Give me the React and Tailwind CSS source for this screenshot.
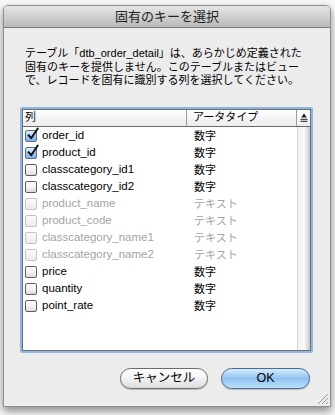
import React from "react";

const rows = [
  { name: "order_id", type: "数字", checked: true, disabled: false },
  { name: "product_id", type: "数字", checked: true, disabled: false },
  { name: "classcategory_id1", type: "数字", checked: false, disabled: false },
  { name: "classcategory_id2", type: "数字", checked: false, disabled: false },
  { name: "product_name", type: "テキスト", checked: false, disabled: true },
  { name: "product_code", type: "テキスト", checked: false, disabled: true },
  { name: "classcategory_name1", type: "テキスト", checked: false, disabled: true },
  { name: "classcategory_name2", type: "テキスト", checked: false, disabled: true },
  { name: "price", type: "数字", checked: false, disabled: false },
  { name: "quantity", type: "数字", checked: false, disabled: false },
  { name: "point_rate", type: "数字", checked: false, disabled: false },
];

function Checkbox({ checked, disabled }) {
  if (checked) {
    return (
      <div className="relative w-[12px] h-[12px] rounded-[2px] border border-[#4f6f9c] bg-gradient-to-b from-[#e4effb] via-[#a9c9ee] to-[#7fb0e6] shrink-0">
        <svg className="absolute left-[0px] top-[-4px]" width="14" height="14" viewBox="0 0 14 14">
          <path d="M2.5 8.2 L5.2 11.2 L11.8 1.5" fill="none" stroke="#111" strokeWidth="2" strokeLinecap="round" strokeLinejoin="round" />
        </svg>
      </div>
    );
  }
  return (
    <div
      className={
        "w-[12px] h-[12px] rounded-[2px] border shrink-0 bg-gradient-to-b " +
        (disabled
          ? "border-[#c4c4c4] from-[#fbfbfb] to-[#ececec]"
          : "border-[#5e5e5e] from-[#ffffff] via-[#f3f3f3] to-[#dcdcdc]")
      }
    />
  );
}

export default function App() {
  const font = { fontFamily: '"Liberation Sans", "Noto Sans CJK JP", sans-serif' };
  return (
    <div className="w-[335px] h-[415px] bg-[#f7f7f7] pt-[5px] pl-[3px]" style={font}>
      <div className="w-[328px] h-[402px] flex flex-col bg-[#ececec] rounded-t-[5px] border border-[#8e8e8e] shadow-[0_4px_9px_rgba(0,0,0,0.45)]">
        {/* Title bar */}
        <div className="h-[22px] shrink-0 rounded-t-[4px] bg-gradient-to-b from-[#e6e6e6] to-[#b9b9b9] border-b border-[#7c7c7c] flex items-center justify-center">
          <span className="text-[13px] text-[#222] leading-none">固有のキーを選択</span>
        </div>

        {/* Description */}
        <div className="pl-[21px] pt-[19px] text-[11px] leading-[13.5px] text-black whitespace-nowrap">
          <div>テーブル「dtb_order_detail」は、あらかじめ定義された</div>
          <div>固有のキーを提供しません。このテーブルまたはビュー</div>
          <div>で、レコードを固有に識別する列を選択してください。</div>
        </div>

        {/* Table */}
        <div className="ml-[16px] mt-[19px] w-[293px] h-[246px] p-[2px] rounded-[2px] bg-[#8db6e4]">
          <div className="w-full h-full border border-[#6f6f6f] bg-white flex flex-col">
            {/* Header */}
            <div className="h-[17px] shrink-0 flex border-b border-[#6a6a6a] bg-gradient-to-b from-[#ffffff] to-[#ececec] text-[11px] leading-none text-black">
              <div className="w-[164px] border-r border-[#9a9a9a] flex items-center pl-[2px]">列</div>
              <div className="w-[110px] border-r border-[#9a9a9a] flex items-center pl-[6px]">アータタイプ</div>
              <div className="flex-1 flex items-center justify-center">
                <svg width="8" height="9" viewBox="0 0 8 9">
                  <path d="M4 0.5 L6.8 4.5 L1.2 4.5 Z" fill="#222" />
                  <rect x="0.5" y="5.8" width="7" height="1" fill="#222" />
                  <rect x="0.5" y="7.8" width="7" height="1" fill="#222" />
                </svg>
              </div>
            </div>
            {/* Body */}
            <div className="flex-1 flex">
              <div className="w-[274px] pt-[1px]">
                {rows.map((r) => (
                  <div key={r.name} className="h-[17px] flex items-center">
                    <div className="w-[164px] flex items-center pl-[2px] gap-[5px]">
                      <Checkbox checked={r.checked} disabled={r.disabled} />
                      <span className={"text-[11.5px] leading-none " + (r.disabled ? "text-[#a3a3a3]" : "text-black")}>
                        {r.name}
                      </span>
                    </div>
                    <div className={"pl-[7px] text-[11px] leading-none " + (r.disabled ? "text-[#a3a3a3]" : "text-black")}>
                      {r.type}
                    </div>
                  </div>
                ))}
              </div>
              <div className="flex-1 border-l border-[#d6d6d6] bg-gradient-to-r from-[#f2f2f2] via-[#fbfbfb] to-[#c9c9c9]" />
            </div>
          </div>
        </div>

        {/* Buttons */}
        <div className="flex justify-end gap-[13px] pr-[20px] mt-[15px]">
          <button className="w-[88px] h-[21px] rounded-full border border-[#6b6b6b] bg-gradient-to-b from-[#ffffff] via-[#f2f2f2] to-[#dcdcdc] text-[12.5px] leading-none text-black shadow-[0_1px_1px_rgba(0,0,0,0.2)]">
            キャンセル
          </button>
          <button className="w-[89px] h-[21px] rounded-full border border-[#4a6a96] bg-gradient-to-b from-[#d6ebfb] via-[#8ec3f0] to-[#b9e0fb] text-[12.5px] leading-none text-black shadow-[0_1px_1px_rgba(0,0,0,0.2)]">
            OK
          </button>
        </div>

        {/* Resize grip */}
        <div className="flex-1 flex items-end justify-end">
          <svg width="14" height="14" viewBox="0 0 14 14" className="mb-[1px] mr-[1px]">
            <line x1="3" y1="13" x2="13" y2="3" stroke="#9a9a9a" strokeWidth="1" />
            <line x1="7" y1="13" x2="13" y2="7" stroke="#9a9a9a" strokeWidth="1" />
            <line x1="11" y1="13" x2="13" y2="11" stroke="#9a9a9a" strokeWidth="1" />
          </svg>
        </div>
      </div>
    </div>
  );
}
